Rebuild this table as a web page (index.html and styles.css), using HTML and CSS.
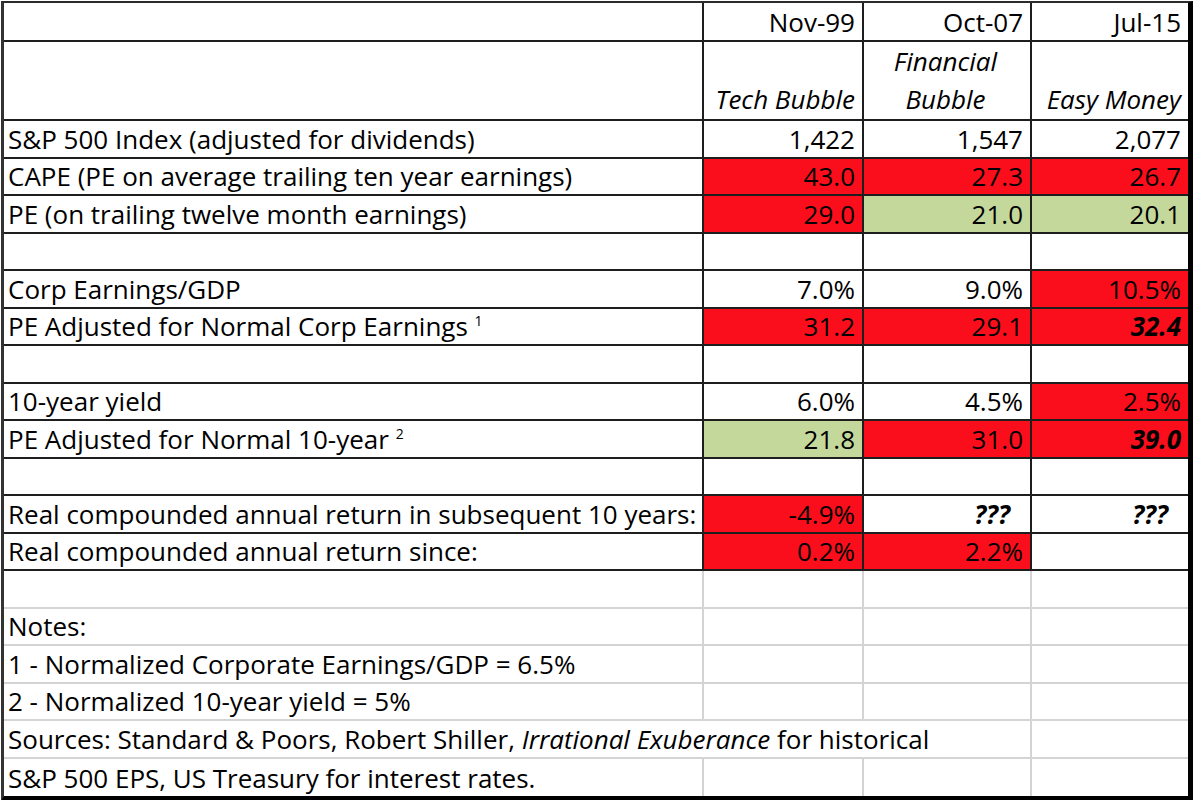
FILE: index.html
```html
<!DOCTYPE html>
<html>
<head>
<meta charset="utf-8">
<link rel="stylesheet" href="styles.css">
</head>
<body>
<table class="sheet">
  <colgroup>
    <col class="c-label">
    <col class="c-a">
    <col class="c-b">
    <col class="c-c">
  </colgroup>
  <tr class="r-date h1">
    <td class="frame"></td>
    <td class="frame num">Nov-99</td>
    <td class="frame num">Oct-07</td>
    <td class="frame num last">Jul-15</td>
  </tr>
  <tr class="h2">
    <td class="frame"></td>
    <td class="frame num it">Tech Bubble</td>
    <td class="frame ctr it">Financial<br>Bubble</td>
    <td class="frame num it last">Easy Money</td>
  </tr>
  <tr class="ra">
    <td class="frame">S&amp;P 500 Index (adjusted for dividends)</td>
    <td class="frame num">1,422</td>
    <td class="frame num">1,547</td>
    <td class="frame num last">2,077</td>
  </tr>
  <tr class="rb">
    <td class="frame">CAPE (PE on average trailing ten year earnings)</td>
    <td class="frame num red">43.0</td>
    <td class="frame num red">27.3</td>
    <td class="frame num red last">26.7</td>
  </tr>
  <tr class="ra">
    <td class="frame">PE (on trailing twelve month earnings)</td>
    <td class="frame num red">29.0</td>
    <td class="frame num green">21.0</td>
    <td class="frame num green last">20.1</td>
  </tr>
  <tr class="rb">
    <td class="frame"></td>
    <td class="frame"></td>
    <td class="frame"></td>
    <td class="frame last"></td>
  </tr>
  <tr class="ra">
    <td class="frame">Corp Earnings/GDP</td>
    <td class="frame num">7.0%</td>
    <td class="frame num">9.0%</td>
    <td class="frame num red last">10.5%</td>
  </tr>
  <tr class="rb">
    <td class="frame">PE Adjusted for Normal Corp Earnings <sup>1</sup></td>
    <td class="frame num red">31.2</td>
    <td class="frame num red">29.1</td>
    <td class="frame num red bi last">32.4</td>
  </tr>
  <tr class="ra">
    <td class="frame"></td>
    <td class="frame"></td>
    <td class="frame"></td>
    <td class="frame last"></td>
  </tr>
  <tr class="rb">
    <td class="frame">10-year yield</td>
    <td class="frame num">6.0%</td>
    <td class="frame num">4.5%</td>
    <td class="frame num red last">2.5%</td>
  </tr>
  <tr class="ra">
    <td class="frame">PE Adjusted for Normal 10-year <sup>2</sup></td>
    <td class="frame num green">21.8</td>
    <td class="frame num red">31.0</td>
    <td class="frame num red bi last">39.0</td>
  </tr>
  <tr class="rb">
    <td class="frame"></td>
    <td class="frame"></td>
    <td class="frame"></td>
    <td class="frame last"></td>
  </tr>
  <tr class="ra">
    <td class="frame">Real compounded annual return in subsequent 10 years:</td>
    <td class="frame num red">-4.9%</td>
    <td class="frame num bi q">???</td>
    <td class="frame num bi q last">???</td>
  </tr>
  <tr class="rb">
    <td class="frame">Real compounded annual return since:</td>
    <td class="frame num red">0.2%</td>
    <td class="frame num red">2.2%</td>
    <td class="frame last"></td>
  </tr>
  <tr class="ra">
    <td class="grid"></td>
    <td class="grid"></td>
    <td class="grid"></td>
    <td class="grid last"></td>
  </tr>
  <tr class="rb">
    <td class="grid">Notes:</td>
    <td class="grid"></td>
    <td class="grid"></td>
    <td class="grid last"></td>
  </tr>
  <tr class="ra">
    <td class="grid">1 - Normalized Corporate Earnings/GDP = 6.5%</td>
    <td class="grid"></td>
    <td class="grid"></td>
    <td class="grid last"></td>
  </tr>
  <tr class="rb">
    <td class="grid">2 - Normalized 10-year yield = 5%</td>
    <td class="grid"></td>
    <td class="grid"></td>
    <td class="grid last"></td>
  </tr>
  <tr class="ra">
    <td class="grid" colspan="3">Sources: Standard &amp; Poors, Robert Shiller, <i>Irrational Exuberance</i> for historical</td>
    <td class="grid last"></td>
  </tr>
  <tr class="rb end">
    <td class="grid">S&amp;P 500 EPS, US Treasury for interest rates.</td>
    <td class="grid"></td>
    <td class="grid"></td>
    <td class="grid last"></td>
  </tr>
</table>
</body>
</html>
```
FILE: styles.css
```css
html, body {
  margin: 0;
  padding: 0;
  background: #ffffff;
}

body {
  font-family: "Open Sans", Lato, sans-serif;
  font-size: 26px;
  color: #000000;
}

.sheet {
  margin: 1px 0 0 1px;
  border-collapse: separate;
  border-spacing: 0;
  table-layout: fixed;
  width: 1192px;
  border-top: 2px solid #2b2b2b;
  border-left: 3px solid #333333;
  border-right: 5px solid #000000;
  border-bottom: 5px solid #000000;
}

.c-label { width: 700px; }
.c-a { width: 160px; }
.c-b { width: 168px; }
.c-c { width: 156px; }

.sheet td {
  box-sizing: border-box;
  padding: 0 7px 1px 4px;
  line-height: 34px;
  vertical-align: bottom;
  white-space: nowrap;
  overflow: visible;
}

.h1 td { height: 39px; }
.h2 td { height: 74px; line-height: 38px; }
.ra td { height: 38px; }
.rb td { height: 37px; }

.frame {
  border-right: 2px solid #1e1e1e;
  border-bottom: 2px solid #1e1e1e;
}

.grid {
  border-right: 2px solid #d4d4d4;
  border-bottom: 2px solid #d4d4d4;
}

.sheet td.last { border-right: none; }
.end td { border-bottom: none; }

.num { text-align: right; }
.ctr { text-align: center; }
.it { font-style: italic; }
.bi { font-weight: bold; font-style: italic; }
.sheet td.q { padding-right: 20px; }

.red { background: #fb0e1c; }
.green { background: #c4d89c; }

sup {
  font-size: 14px;
  line-height: 0;
  vertical-align: 10px;
}
```
